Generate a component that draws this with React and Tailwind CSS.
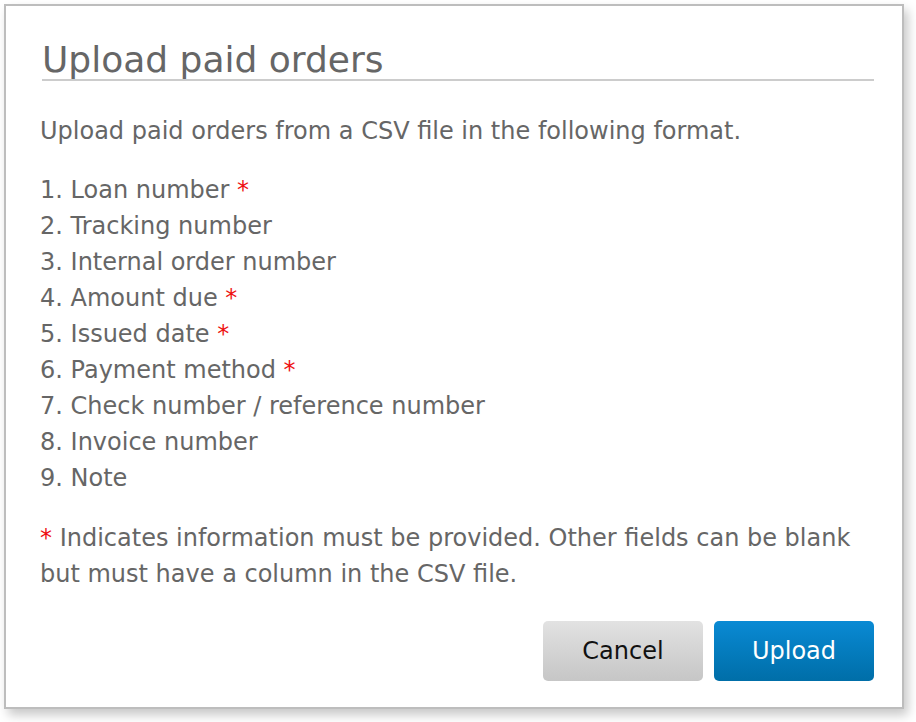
export default function App() {
  const fields = [
    { label: 'Loan number', required: true },
    { label: 'Tracking number' },
    { label: 'Internal order number' },
    { label: 'Amount due', required: true },
    { label: 'Issued date', required: true },
    { label: 'Payment method', required: true },
    { label: 'Check number / reference number' },
    { label: 'Invoice number' },
    { label: 'Note' },
  ];

  return (
    <div className="w-[916px] h-[722px] bg-white pt-[4px] pl-[4px]" style={{ fontFamily: '"DejaVu Sans", Verdana, sans-serif' }}>
      <div className="w-[900px] h-[705px] bg-white border-2 border-[#bdbdbd] shadow-[4px_6px_10px_rgba(0,0,0,0.22)] pl-[34px] pr-[28px] pt-[34px]">
        {/* Title */}
        <h1 className="ml-[2px] text-[36px] leading-[39px] text-[#666] border-b-2 border-[#cccccc]">Upload paid orders</h1>

        <p className="mt-[32px] text-[24px] leading-[36px] text-[#666]">Upload paid orders from a CSV file in the following format.</p>

        <ol className="mt-[23px] text-[24px] leading-[36px] text-[#666]">
          {fields.map((f, i) => (
            <li key={i}>
              {i + 1}. {f.label}
              {f.required && <span className="text-[#ee1111]"> *</span>}
            </li>
          ))}
        </ol>

        <p className="mt-[24px] text-[24px] leading-[36px] text-[#666]">
          <span className="text-[#ee1111]">*</span> Indicates information must be provided. Other fields can be blank but must have a column in the CSV file.
        </p>

        {/* Actions */}
        <div className="flex justify-end gap-[11px] mt-[29px]">
          <button className="w-[160px] h-[60px] rounded-[5px] bg-gradient-to-b from-[#e2e2e2] to-[#c6c6c6] text-[#111] text-[24px]">Cancel</button>
          <button className="w-[160px] h-[60px] rounded-[5px] bg-gradient-to-b from-[#0a8ad4] to-[#006ea8] text-white text-[24px]">Upload</button>
        </div>
      </div>
    </div>
  );
}
